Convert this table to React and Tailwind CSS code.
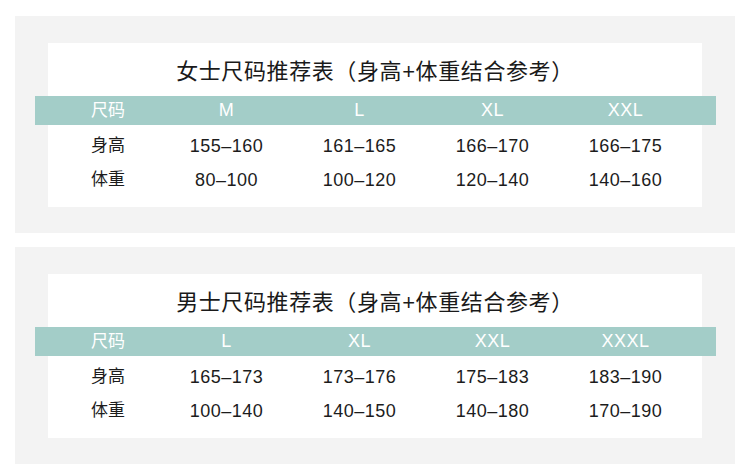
const tables = [
  {
    title: '女士尺码推荐表（身高+体重结合参考）',
    sizes: ['M', 'L', 'XL', 'XXL'],
    height: ['155–160', '161–165', '166–170', '166–175'],
    weight: ['80–100', '100–120', '120–140', '140–160'],
  },
  {
    title: '男士尺码推荐表（身高+体重结合参考）',
    sizes: ['L', 'XL', 'XXL', 'XXXL'],
    height: ['165–173', '173–176', '175–183', '183–190'],
    weight: ['100–140', '140–150', '140–180', '170–190'],
  },
]

const font = { fontFamily: '"Liberation Sans", "Noto Sans CJK SC", sans-serif' }

function Row({ label, values, header }) {
  return (
    <div className={`grid grid-cols-[112px_133px_133px_133px_133px] items-center ${header ? 'h-[29px] text-white' : 'h-[34px] text-[#1c1c1c]'}`}>
      <div className="pl-2 text-center text-[17px]">{label}</div>
      {values.map((v, i) => (
        <div key={i} className="text-center text-[18px] tracking-[0.5px]">{v}</div>
      ))}
    </div>
  )
}

function SizeTable({ title, sizes, height, weight }) {
  return (
    <div className="bg-[#f3f3f3] mx-[15px] pt-[27px] pb-[26px] px-[33px]">
      <div className="bg-white pb-[10px]">
        {/* Title */}
        <div className="h-[53px] flex items-center justify-center pt-[3px] text-[22px] text-[#1a1a1a] tracking-[0.6px]">
          {title}
        </div>
        {/* Header bar */}
        <div className="bg-[#a3cdc8] ml-[-13px] mr-[-14px] pl-[13px]">
          <Row header label="尺码" values={sizes} />
        </div>
        <div className="pt-[4px]">
          <Row label="身高" values={height} />
          <Row label="体重" values={weight} />
        </div>
      </div>
    </div>
  )
}

export default function App() {
  return (
    <div className="w-[750px] h-[473px] bg-white pt-[16px] flex flex-col gap-[14px]" style={font}>
      {tables.map((t, i) => (
        <SizeTable key={i} {...t} />
      ))}
    </div>
  )
}
